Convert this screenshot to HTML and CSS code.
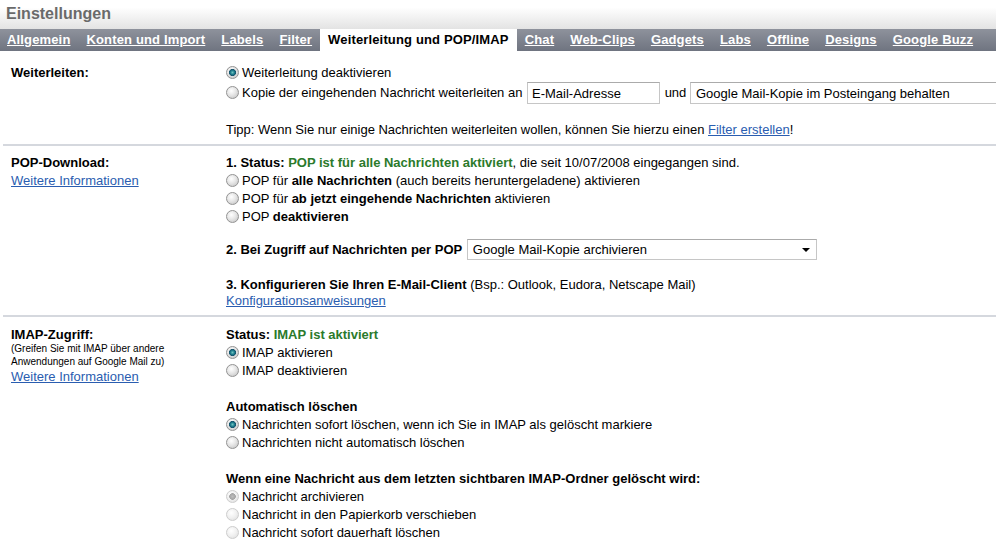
FILE: index.html
```html
<!DOCTYPE html>
<html lang="de">
<head>
  <meta charset="UTF-8">
  <title>Einstellungen</title>
  <link rel="stylesheet" href="styles.css">
</head>
<body>
  <div class="title">Einstellungen</div>
  <div class="tabs">
    <a href="#">Allgemein</a>
    <a href="#">Konten und Import</a>
    <a href="#">Labels</a>
    <a href="#">Filter</a>
    <span class="tab-active">Weiterleitung und POP/IMAP</span>
    <a href="#">Chat</a>
    <a href="#">Web-Clips</a>
    <a href="#">Gadgets</a>
    <a href="#">Labs</a>
    <a href="#">Offline</a>
    <a href="#">Designs</a>
    <a href="#">Google Buzz</a>
  </div>

  <div class="row row-fwd">
    <div class="label"><b>Weiterleiten:</b></div>
    <div class="opts">
      <label class="opt"><input class="radio" type="radio" name="fwd" checked>Weiterleitung deaktivieren</label>
      <div class="opt fwd-line">
        <input class="radio" type="radio" name="fwd">Kopie der eingehenden Nachricht weiterleiten an
        <input class="txt" type="text" value="E-Mail-Adresse">
        und
        <span class="sel-wrap sel-keep"><select class="sel"><option>Google Mail-Kopie im Posteingang behalten</option></select></span>
      </div>
      <div class="tip">Tipp: Wenn Sie nur einige Nachrichten weiterleiten wollen, können Sie hierzu einen <a href="#">Filter erstellen</a>!</div>
    </div>
  </div>

  <div class="row row-pop">
    <div class="label">
      <b>POP-Download:</b><br>
      <a href="#">Weitere Informationen</a>
    </div>
    <div class="opts">
      <div class="opt"><b>1. Status: <span class="ok">POP ist für alle Nachrichten aktiviert</span></b>, die seit 10/07/2008 eingegangen sind.</div>
      <label class="opt"><input class="radio" type="radio" name="pop">POP für <b>alle Nachrichten</b> (auch bereits heruntergeladene) aktivieren</label>
      <label class="opt"><input class="radio" type="radio" name="pop">POP für <b>ab jetzt eingehende Nachrichten</b> aktivieren</label>
      <label class="opt"><input class="radio" type="radio" name="pop">POP <b>deaktivieren</b></label>
      <div class="step2">
        <b>2. Bei Zugriff auf Nachrichten per POP</b>
        <span class="sel-wrap sel-pop"><select class="sel"><option>Google Mail-Kopie archivieren</option></select></span>
      </div>
      <div class="step3"><b>3. Konfigurieren Sie Ihren E-Mail-Client</b> (Bsp.: Outlook, Eudora, Netscape Mail)</div>
      <div class="step3-link"><a href="#">Konfigurationsanweisungen</a></div>
    </div>
  </div>

  <div class="row row-imap">
    <div class="label">
      <b>IMAP-Zugriff:</b>
      <div class="small">(Greifen Sie mit IMAP über andere<br>Anwendungen auf Google Mail zu)</div>
      <a href="#">Weitere Informationen</a>
    </div>
    <div class="opts">
      <div class="opt"><b>Status: <span class="ok">IMAP ist aktiviert</span></b></div>
      <label class="opt"><input class="radio" type="radio" name="imap" checked>IMAP aktivieren</label>
      <label class="opt"><input class="radio" type="radio" name="imap">IMAP deaktivieren</label>

      <div class="opt group"><b>Automatisch löschen</b></div>
      <label class="opt"><input class="radio" type="radio" name="del" checked>Nachrichten sofort löschen, wenn ich Sie in IMAP als gelöscht markiere</label>
      <label class="opt"><input class="radio" type="radio" name="del">Nachrichten nicht automatisch löschen</label>

      <div class="opt group"><b>Wenn eine Nachricht aus dem letzten sichtbaren IMAP-Ordner gelöscht wird:</b></div>
      <label class="opt"><input class="radio" type="radio" name="last" checked disabled>Nachricht archivieren</label>
      <label class="opt"><input class="radio" type="radio" name="last" disabled>Nachricht in den Papierkorb verschieben</label>
      <label class="opt"><input class="radio" type="radio" name="last" disabled>Nachricht sofort dauerhaft löschen</label>
    </div>
  </div>
</body>
</html>
```

FILE: styles.css
```css
html {
  overflow: hidden;
}
body {
  margin: 0;
  font-family: "Liberation Sans", Arial, sans-serif;
  font-size: 13px;
  line-height: 18px;
  color: #000;
  background: #fff;
}
a {
  color: #2a5db0;
}
.title {
  height: 29px;
  padding-left: 6px;
  font-size: 16px;
  font-weight: bold;
  line-height: 27px;
  color: #6a6a6a;
  background: linear-gradient(#fff 25%, #e3e3e3);
}
.tabs {
  display: flex;
  height: 22px;
  white-space: nowrap;
  background: linear-gradient(#8e929c, #6f7480);
}
.tabs a,
.tab-active {
  padding: 0 8px;
  line-height: 22px;
  font-weight: bold;
  letter-spacing: 0.15px;
}
.tabs a {
  color: #fff;
}
.tabs a:first-child {
  padding-left: 7px;
}
.tab-active {
  background: #fff;
  color: #000;
}
.row {
  display: flex;
  margin-left: 3px;
  border-top: 2px solid #d5d8de;
}
.row-fwd {
  border-top: none;
  padding: 13px 0 5px;
}
.row-pop {
  padding: 8px 0 7px;
}
.row-imap {
  padding: 9px 0 0;
}
.label {
  width: 210px;
  flex: none;
  padding-left: 8px;
}
.label .small {
  margin-top: -2px;
  font-size: 10px;
  line-height: 13px;
}
.label a {
  line-height: 15px;
}
.opts {
  flex: 1;
  padding-left: 5px;
}
.opt {
  display: block;
  height: 18px;
  white-space: nowrap;
}
.ok {
  color: #2b7a2b;
}
.radio {
  appearance: none;
  -webkit-appearance: none;
  width: 13px;
  height: 13px;
  margin: 0 3px 0 0;
  border: 1px solid #939393;
  border-radius: 50%;
  vertical-align: -2px;
  background: radial-gradient(circle at 40% 35%, #fff 0, #e6e6e6 45%, #bdbdbd 100%);
}
.radio:checked {
  background:
    radial-gradient(circle, #6fc3c0 0, #1e7d8c 2px, #14506a 3.3px, transparent 3.8px),
    radial-gradient(circle at 40% 35%, #fff 0, #e6e6e6 45%, #bdbdbd 100%);
}
.radio:disabled {
  border-color: #cdcdcd;
  background: radial-gradient(circle at 40% 35%, #fff 0, #f0f0f0 50%, #dadada 100%);
}
.radio:disabled:checked {
  background:
    radial-gradient(circle, #bdbdbd 0, #a4a4a4 3px, transparent 3.6px),
    radial-gradient(circle at 40% 35%, #fff 0, #f0f0f0 50%, #dadada 100%);
}
.fwd-line {
  height: 23px;
  line-height: 22px;
}
.txt {
  box-sizing: border-box;
  width: 133px;
  height: 22px;
  margin: 0 1px;
  padding: 0 4px;
  border: 1px solid #c6c6c6;
  border-top-color: #ababab;
  font: 13px "Liberation Sans", Arial, sans-serif;
  color: #000;
  vertical-align: top;
}
.sel-wrap {
  position: relative;
  display: inline-block;
  vertical-align: top;
}
.sel {
  appearance: none;
  -webkit-appearance: none;
  box-sizing: border-box;
  height: 22px;
  padding: 0 20px 0 5px;
  border: 1px solid #c6c6c6;
  border-top-color: #ababab;
  border-radius: 0;
  background: #fff;
  font: 13px "Liberation Sans", Arial, sans-serif;
  color: #000;
}
.sel-wrap::after {
  content: "";
  position: absolute;
  right: 7px;
  top: 9px;
  border-left: 4px solid transparent;
  border-right: 4px solid transparent;
  border-top: 4px solid #000;
}
.sel-keep .sel {
  width: 340px;
}
.sel-pop {
  margin-left: 1px;
}
.sel-pop .sel {
  width: 350px;
  height: 21px;
}
.tip {
  margin-top: 16px;
}
.step2 {
  margin-top: 13px;
  height: 21px;
  line-height: 21px;
}
.step3 {
  margin-top: 16px;
}
.step3-link {
  line-height: 14px;
}
.group {
  margin-top: 18px;
}
```
